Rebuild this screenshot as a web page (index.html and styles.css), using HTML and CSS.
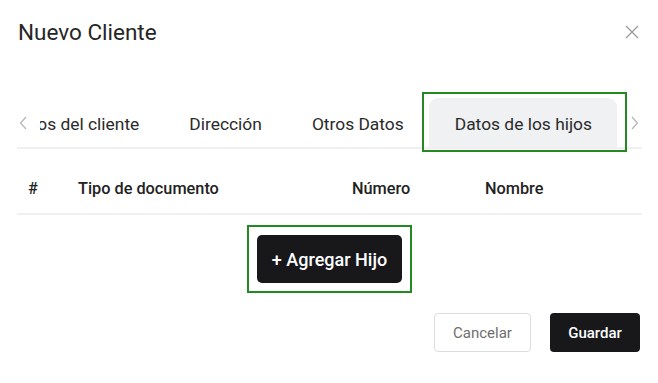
FILE: index.html
```html
<!DOCTYPE html>
<html>
<head>
  <title>Nuevo Cliente</title>
  <link rel="stylesheet" href="styles.css">
</head>
<body>
  <div class="modal">
    <div class="modal-header">
      <h2 class="modal-title">Nuevo Cliente</h2>
      <button class="close-btn" aria-label="Cerrar">
        <svg width="14" height="14" viewBox="0 0 14 14"><path d="M1 1L13 13M13 1L1 13" stroke="#9a9a9a" stroke-width="1.3" fill="none"/></svg>
      </button>
    </div>

    <div class="tabs">
      <span class="tab-arrow">
        <svg width="8" height="14" viewBox="0 0 8 14"><path d="M7 1L1.5 7L7 13" stroke="#b5b5b5" stroke-width="1.2" fill="none"/></svg>
      </span>
      <div class="tabs-view">
        <div class="tabs-list">
          <div class="tab">Datos del cliente</div>
          <div class="tab">Dirección</div>
          <div class="tab">Otros Datos</div>
          <div class="tab active">Datos de los hijos</div>
        </div>
      </div>
      <span class="tab-arrow right">
        <svg width="8" height="14" viewBox="0 0 8 14"><path d="M1 1L6.5 7L1 13" stroke="#b5b5b5" stroke-width="1.2" fill="none"/></svg>
      </span>
      <div class="highlight tab-highlight"></div>
    </div>

    <div class="table-head">
      <div class="th">#</div>
      <div class="th">Tipo de documento</div>
      <div class="th">Número</div>
      <div class="th">Nombre</div>
    </div>

    <div class="add-row">
      <div class="add-frame">
        <button class="btn-add">+ Agregar Hijo</button>
      </div>
    </div>

    <div class="modal-footer">
      <button class="btn btn-cancel">Cancelar</button>
      <button class="btn btn-save">Guardar</button>
    </div>
  </div>
</body>
</html>
```

FILE: styles.css
```css
body {
  margin: 0;
  background: #fff;
  font-family: Roboto, "Liberation Sans", sans-serif;
  color: #222;
}

.modal {
  width: 658px;
  padding: 0 16px 0 17px;
  box-sizing: border-box;
}

.modal-header {
  display: flex;
  justify-content: space-between;
  align-items: center;
  height: 64px;
}

.modal-title {
  margin: 0;
  margin-left: 1px;
  font-size: 22.5px;
  font-weight: 400;
  color: #262626;
}

.close-btn {
  background: none;
  border: none;
  padding: 0;
  margin-right: 3px;
  display: flex;
  cursor: pointer;
}

.tabs {
  position: relative;
  display: flex;
  align-items: flex-end;
  margin-top: 34px;
  border-bottom: 2px solid #f0f0f2;
}

.tab-arrow {
  width: 23px;
  height: 49px;
  display: flex;
  align-items: center;
  padding-left: 2px;
  box-sizing: border-box;
}

.tab-arrow.right {
  width: 25px;
  padding-left: 14px;
}

.tabs-view {
  flex: 1;
  overflow: hidden;
}

.tabs-list {
  display: flex;
  justify-content: flex-end;
}

.tab {
  flex: none;
  height: 49px;
  box-sizing: border-box;
  padding: 3px 25px 0;
  line-height: 46px;
  font-size: 17.4px;
  color: #2a2a2a;
  white-space: nowrap;
}

.tab.active {
  background: #eff1f3;
  border-radius: 9px 9px 0 0;
  padding: 3px 25px 0 26px;
}

.highlight {
  position: absolute;
  border: 2px solid #238a23;
  pointer-events: none;
}

.tab-highlight {
  left: 405px;
  top: -6px;
  width: 201px;
  height: 56px;
}

.table-head {
  display: grid;
  grid-template-columns: 50px 274px 133px 1fr;
  height: 66px;
  align-items: center;
  padding-top: 15px;
  box-sizing: border-box;
  border-bottom: 2px solid #f0f0f2;
}

.th {
  padding-left: 11px;
  font-size: 16.3px;
  font-weight: 500;
  color: #222;
}

.add-row {
  display: flex;
  justify-content: center;
  padding-top: 10px;
}

.add-frame {
  display: flex;
  padding: 8px;
  border: 2px solid #238a23;
}

.btn-add {
  width: 145px;
  height: 48px;
  background: #18181b;
  color: #fff;
  border: none;
  border-radius: 5px;
  font-family: Roboto, "Liberation Sans", sans-serif;
  font-size: 18px;
  font-weight: 500;
}

.modal-footer {
  display: flex;
  justify-content: flex-end;
  gap: 19px;
  margin-top: 20px;
  padding-right: 2px;
}

.btn {
  height: 39px;
  border-radius: 4px;
  font-family: Roboto, "Liberation Sans", sans-serif;
  font-size: 15px;
}

.btn-cancel {
  width: 97px;
  background: #fff;
  border: 1px solid #dcdde0;
  color: #6e6e6e;
}

.btn-save {
  width: 90px;
  background: #18181b;
  border: none;
  color: #fff;
  font-weight: 500;
}
```
